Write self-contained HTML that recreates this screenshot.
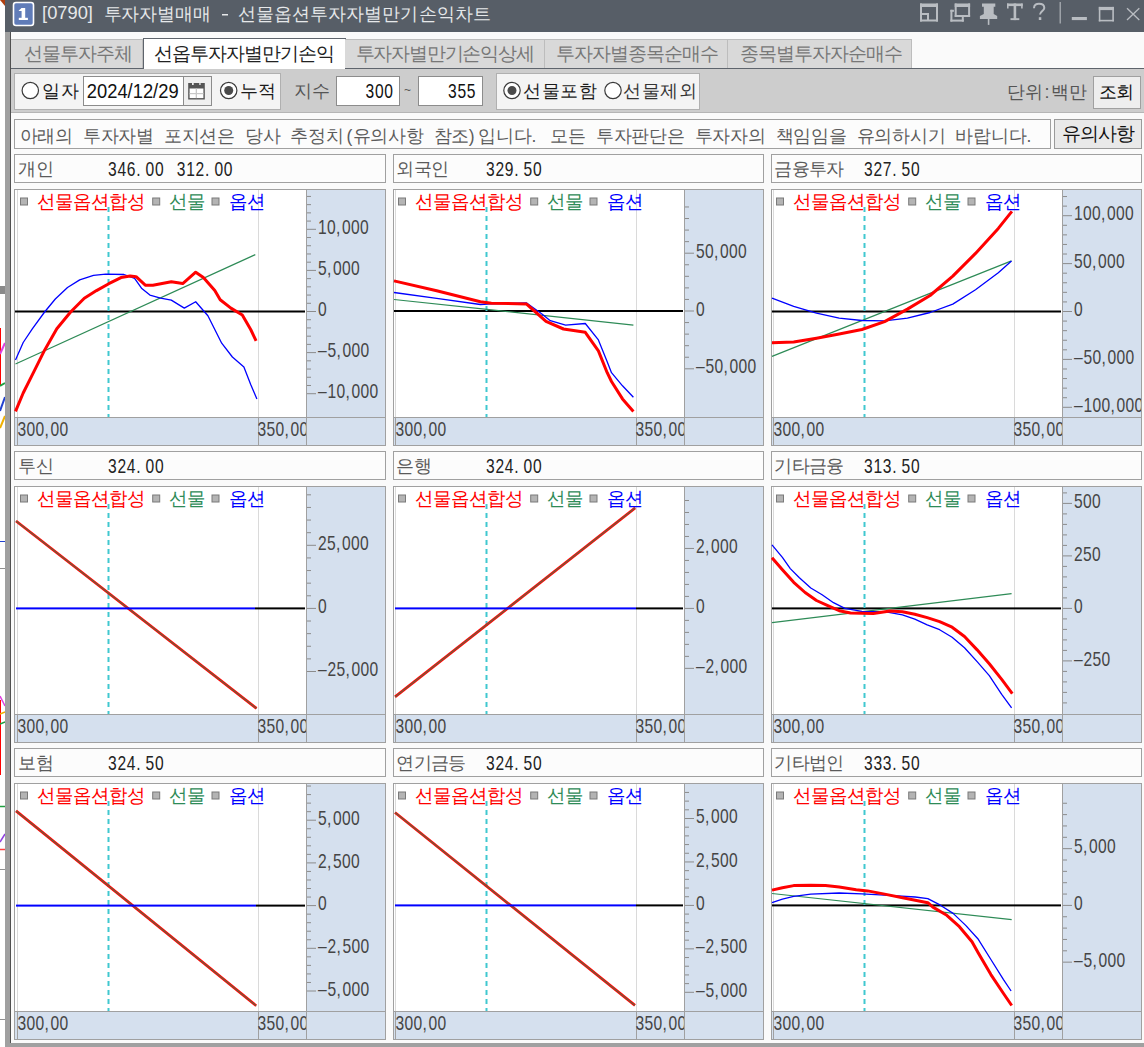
<!DOCTYPE html>
<html><head><meta charset="utf-8"><style>
html,body{margin:0;padding:0;background:#fafafa;width:1144px;height:1047px;overflow:hidden}
svg{display:block}
</style></head><body>
<svg width="1144" height="1047" viewBox="0 0 1144 1047" font-family="Liberation Sans, sans-serif" shape-rendering="auto">
<rect x="0" y="0" width="1144" height="1047" fill="#fafafa"/>
<rect x="0" y="0" width="5" height="1047" fill="#ffffff"/>
<polygon points="0,0 5,0 5,6" fill="#b04010"/>
<rect x="0" y="286" width="5" height="8" fill="#8a8a8a"/>
<rect x="0" y="328" width="1" height="58" fill="#ff0000"/>
<line x1="0" y1="354" x2="5" y2="343" stroke="#e040e0" stroke-width="2"/>
<line x1="0" y1="386" x2="5" y2="383" stroke="#20a040" stroke-width="2"/>
<line x1="0" y1="411" x2="5" y2="397" stroke="#2040d0" stroke-width="2"/>
<line x1="0" y1="428" x2="5" y2="416" stroke="#f0b000" stroke-width="2"/>
<line x1="0" y1="541.5" x2="5" y2="541.5" stroke="#2040d0" stroke-width="1"/>
<line x1="0" y1="568.5" x2="5" y2="568.5" stroke="#909090" stroke-width="1"/>
<line x1="0" y1="696" x2="5" y2="706" stroke="#e040e0" stroke-width="1.5"/>
<rect x="0" y="700" width="1" height="60" fill="#ff0000"/>
<line x1="0" y1="714" x2="5" y2="712" stroke="#f0b000" stroke-width="1.5"/>
<line x1="0" y1="724" x2="5" y2="722" stroke="#20a040" stroke-width="1.5"/>
<rect x="0" y="760" width="1" height="15" fill="#ff0000"/>
<line x1="0" y1="806.5" x2="5" y2="806.5" stroke="#20a040" stroke-width="1.5"/>
<line x1="0" y1="842" x2="5" y2="834" stroke="#9040e0" stroke-width="1.5"/>
<line x1="0" y1="849.5" x2="5" y2="849.5" stroke="#ff4040" stroke-width="1.5"/>
<line x1="0" y1="869.5" x2="5" y2="869.5" stroke="#909090" stroke-width="1"/>
<line x1="0" y1="1019.5" x2="5" y2="1019.5" stroke="#909090" stroke-width="1"/>
<rect x="5" y="32" width="5" height="1015" fill="#a0a0a0"/>
<rect x="10" y="32" width="1" height="1011" fill="#505050"/>
<rect x="5" y="1043" width="1139" height="4" fill="#a0a0a0"/>
<rect x="5" y="0" width="1139" height="32" fill="#575e67"/>
<rect x="13.5" y="2.5" width="20" height="23" rx="2.5" fill="#607cb8" stroke="#ffffff" stroke-width="1.6"/>
<rect x="21.6" y="8" width="3.6" height="11" fill="#ffffff"/>
<path d="M18.8 10.6 L21.6 8 H23 V11 H18.8 Z" fill="#ffffff"/>
<rect x="18.8" y="17.8" width="9.1" height="2.2" fill="#ffffff"/>
<text x="42.05" y="19.299999999999997" font-size="19" fill="#e6e8ea" textLength="50.9" lengthAdjust="spacingAndGlyphs">[0790]</text>
<text transform="translate(103.50 19.50) scale(1.0 1)" x="0.00 17.80 35.60 53.40 71.20 89.00" y="0" font-size="18" fill="#e6e8ea">투자자별매매</text>
<rect x="222" y="14" width="6" height="1.5" fill="#e6e8ea"/>
<text transform="translate(237.60 19.50) scale(1.0 1)" x="0.00 18.10 36.20 54.30 72.40 90.50 108.60 126.70 144.80 162.90 181.00 199.10 217.20 235.30" y="0" font-size="18" fill="#e6e8ea">선물옵션투자자별만기손익차트</text>
<rect x="920" y="3.5" width="18" height="3.5" fill="#b9bdc2"/>
<rect x="920" y="3.5" width="2" height="18" fill="#b9bdc2"/>
<rect x="936" y="3.5" width="2" height="18" fill="#b9bdc2"/>
<rect x="920" y="19.5" width="18" height="2" fill="#b9bdc2"/>
<rect x="920" y="13" width="9" height="2" fill="#b9bdc2"/>
<rect x="927" y="13" width="2" height="8" fill="#b9bdc2"/>
<rect x="954.7" y="3.5" width="15.4" height="3.5" fill="#b9bdc2"/>
<rect x="954.7" y="3.5" width="2" height="13.4" fill="#b9bdc2"/>
<rect x="968.1" y="3.5" width="2" height="13.4" fill="#b9bdc2"/>
<rect x="954.7" y="15" width="15.4" height="2" fill="#b9bdc2"/>
<rect x="950.4" y="9.8" width="2" height="11.8" fill="#b9bdc2"/>
<rect x="950.4" y="19.6" width="13.4" height="2" fill="#b9bdc2"/>
<rect x="961.8" y="17" width="2" height="4.6" fill="#b9bdc2"/>
<rect x="950.4" y="9.8" width="3.5" height="2" fill="#b9bdc2"/>
<path d="M982 3.5 H995.3 V6.7 H993.7 V14 L997.2 16 V18.9 H979.9 V16 L983.8 14 V6.7 H982 Z" fill="#b9bdc2"/>
<rect x="987.8" y="18.9" width="1.6" height="6" fill="#b9bdc2"/>
<rect x="1007" y="3.5" width="15.7" height="2.6" fill="#b9bdc2"/>
<rect x="1007" y="3.5" width="1.6" height="5" fill="#b9bdc2"/>
<rect x="1021.1" y="3.5" width="1.6" height="5" fill="#b9bdc2"/>
<rect x="1013.6" y="3.5" width="2.6" height="16.6" fill="#b9bdc2"/>
<rect x="1010.5" y="18.2" width="8.8" height="1.9" fill="#b9bdc2"/>
<path d="M1034 8.2 C1034 4.6 1036.5 3.8 1039 3.8 C1042 3.8 1044.3 5.3 1044.3 8 C1044.3 10.6 1040 11.4 1040 14.5" fill="none" stroke="#b9bdc2" stroke-width="2"/>
<rect x="1038.8" y="17.2" width="2.5" height="2.8" fill="#b9bdc2"/>
<rect x="1059.5" y="2" width="1.5" height="21.5" fill="#9da2a8"/>
<rect x="1071.8" y="17" width="15.1" height="3.1" fill="#b9bdc2"/>
<rect x="1098.8" y="6.9" width="15.1" height="3.2" fill="#b9bdc2"/>
<rect x="1098.8" y="6.9" width="1.6" height="14.5" fill="#b9bdc2"/>
<rect x="1112.3" y="6.9" width="1.6" height="14.5" fill="#b9bdc2"/>
<rect x="1098.8" y="19.8" width="15.1" height="1.6" fill="#b9bdc2"/>
<line x1="1127" y1="8.3" x2="1139.3" y2="20" stroke="#b9bdc2" stroke-width="1.3"/>
<line x1="1139.3" y1="8.3" x2="1127" y2="20" stroke="#b9bdc2" stroke-width="1.3"/>
<rect x="11" y="32" width="1133" height="37" fill="#fafafa"/>
<rect x="11" y="38" width="1133" height="0" fill="#fafafa"/>
<rect x="11" y="68" width="1133" height="1" fill="#5e646c"/>
<rect x="11" y="39" width="132" height="29" fill="#d9d9d9"/>
<rect x="11" y="39" width="132" height="1" fill="#bdbdbd"/>
<rect x="142" y="39" width="1" height="29" fill="#bdbdbd"/>
<rect x="143" y="38" width="203" height="31" fill="#ffffff"/>
<rect x="143" y="38" width="203" height="1" fill="#5e646c"/>
<rect x="143" y="38" width="1" height="31" fill="#5e646c"/>
<rect x="345" y="38" width="1" height="31" fill="#5e646c"/>
<rect x="345" y="39" width="200" height="29" fill="#d9d9d9"/>
<rect x="345" y="39" width="200" height="1" fill="#bdbdbd"/>
<rect x="544" y="39" width="1" height="29" fill="#bdbdbd"/>
<rect x="545" y="39" width="183" height="29" fill="#d9d9d9"/>
<rect x="545" y="39" width="183" height="1" fill="#bdbdbd"/>
<rect x="727" y="39" width="1" height="29" fill="#bdbdbd"/>
<rect x="728" y="39" width="184" height="29" fill="#d9d9d9"/>
<rect x="728" y="39" width="184" height="1" fill="#bdbdbd"/>
<rect x="911" y="39" width="1" height="29" fill="#bdbdbd"/>
<text transform="translate(23.90 60.27) scale(1.0 1)" x="0.00 18.00 36.00 54.00 72.00 90.00" y="0" font-size="18.5" fill="#777777">선물투자주체</text>
<text transform="translate(154.00 60.27) scale(1.0 1)" x="0.00 18.00 36.00 54.00 72.00 90.00 108.00 126.00 144.00 162.00" y="0" font-size="18.5" fill="#222222">선옵투자자별만기손익</text>
<text transform="translate(355.70 60.27) scale(1.0 1)" x="0.00 17.80 35.60 53.40 71.20 89.00 106.80 124.60 142.40 160.20" y="0" font-size="18.5" fill="#777777">투자자별만기손익상세</text>
<text transform="translate(555.60 60.27) scale(1.0 1)" x="0.00 18.10 36.20 54.30 72.40 90.50 108.60 126.70 144.80" y="0" font-size="18.5" fill="#777777">투자자별종목순매수</text>
<text transform="translate(739.90 60.27) scale(1.0 1)" x="0.00 18.00 36.00 54.00 72.00 90.00 108.00 126.00 144.00" y="0" font-size="18.5" fill="#777777">종목별투자자순매수</text>
<rect x="144" y="68" width="201" height="1" fill="#ffffff"/>
<rect x="11" y="69" width="1133" height="44" fill="#cdcdcd"/>
<rect x="11" y="112" width="1133" height="1" fill="#b5b5b5"/>
<rect x="14" y="73" width="267" height="37" fill="#f4f4f4"/>
<rect x="14" y="73" width="267" height="1" fill="#b0b0b0"/>
<rect x="14" y="109" width="267" height="1" fill="#b0b0b0"/>
<rect x="14" y="73" width="1" height="37" fill="#b0b0b0"/>
<rect x="280" y="73" width="1" height="37" fill="#b0b0b0"/>
<circle cx="30.3" cy="90.5" r="8.2" fill="#ffffff" stroke="#3a3a3a" stroke-width="1.2"/>
<text transform="translate(42.00 96.90) scale(1.0 1)" x="0.00 18.50" y="0" font-size="18" fill="#1a1a1a">일자</text>
<rect x="83" y="76" width="128" height="30" fill="#ffffff"/>
<rect x="83" y="76" width="129" height="1" fill="#8c8c8c"/>
<rect x="83" y="105" width="129" height="1" fill="#8c8c8c"/>
<rect x="83" y="76" width="1" height="30" fill="#8c8c8c"/>
<rect x="211" y="76" width="1" height="30" fill="#8c8c8c"/>
<rect x="184" y="77" width="27" height="28" fill="#efefef"/>
<rect x="183" y="77" width="1" height="28" fill="#8c8c8c"/>
<text x="86.8" y="98.0" font-size="20" fill="#111111" textLength="91.8" lengthAdjust="spacingAndGlyphs">2024/12/29</text>
<rect x="188.2" y="83" width="16.6" height="16.5" fill="#555555"/>
<rect x="189.6" y="88.5" width="13.8" height="9.6" fill="#ffffff"/>
<rect x="195.7" y="88.5" width="1.3" height="9.6" fill="#c8c8c8"/>
<rect x="189.6" y="93" width="13.8" height="1.2" fill="#c8c8c8"/>
<rect x="192" y="83" width="1.7" height="2" fill="#efefef"/>
<rect x="199.3" y="83" width="1.3" height="2" fill="#efefef"/>
<circle cx="228.7" cy="90.5" r="8.2" fill="#ffffff" stroke="#3a3a3a" stroke-width="1.2"/>
<circle cx="228.7" cy="90.5" r="4.5" fill="#4a4a4a"/>
<text transform="translate(240.00 96.90) scale(1.0 1)" x="0.00 18.00" y="0" font-size="18" fill="#1a1a1a">누적</text>
<text transform="translate(293.60 96.90) scale(1.0 1)" x="0.00 18.50" y="0" font-size="18" fill="#555555">지수</text>
<rect x="336" y="76" width="64" height="30" fill="#ffffff"/>
<rect x="336" y="76" width="64" height="1" fill="#8c8c8c"/>
<rect x="336" y="105" width="64" height="1" fill="#8c8c8c"/>
<rect x="336" y="76" width="1" height="30" fill="#8c8c8c"/>
<rect x="399" y="76" width="1" height="30" fill="#8c8c8c"/>
<text transform="translate(365.50 97.50) scale(0.78 1)" x="0.00 12.05 24.10" y="0" font-size="20" fill="#111111">300</text>
<text x="404" y="94" font-size="12" fill="#555555">~</text>
<rect x="418" y="76" width="64" height="30" fill="#ffffff"/>
<rect x="418" y="76" width="65" height="1" fill="#8c8c8c"/>
<rect x="418" y="105" width="65" height="1" fill="#8c8c8c"/>
<rect x="418" y="76" width="1" height="30" fill="#8c8c8c"/>
<rect x="482" y="76" width="1" height="30" fill="#8c8c8c"/>
<text transform="translate(448.00 97.50) scale(0.78 1)" x="0.00 12.05 24.10" y="0" font-size="20" fill="#111111">355</text>
<rect x="496" y="73" width="204" height="37" fill="#f4f4f4"/>
<rect x="496" y="73" width="204" height="1" fill="#b0b0b0"/>
<rect x="496" y="109" width="204" height="1" fill="#b0b0b0"/>
<rect x="496" y="73" width="1" height="37" fill="#b0b0b0"/>
<rect x="699" y="73" width="1" height="37" fill="#b0b0b0"/>
<circle cx="512" cy="90.5" r="8.2" fill="#ffffff" stroke="#3a3a3a" stroke-width="1.2"/>
<circle cx="512" cy="90.5" r="4.5" fill="#4a4a4a"/>
<text transform="translate(523.00 96.90) scale(1.0 1)" x="0.00 18.50 37.00 55.50" y="0" font-size="18" fill="#1a1a1a">선물포함</text>
<circle cx="613" cy="90.5" r="8.2" fill="#ffffff" stroke="#3a3a3a" stroke-width="1.2"/>
<text transform="translate(623.00 96.90) scale(1.0 1)" x="0.00 18.50 37.00 55.50" y="0" font-size="18" fill="#333333">선물제외</text>
<text transform="translate(1006.50 98.00) scale(1.0 1)" x="0.00 18.00 38.00 44.50 62.50" y="0" font-size="18" fill="#555555">단위:백만</text>
<rect x="1093" y="76" width="48" height="33" fill="#eeeeee"/>
<rect x="1093" y="76" width="48" height="1" fill="#a0a0a0"/>
<rect x="1093" y="108" width="48" height="1" fill="#a0a0a0"/>
<rect x="1093" y="76" width="1" height="33" fill="#a0a0a0"/>
<rect x="1140" y="76" width="1" height="33" fill="#a0a0a0"/>
<text transform="translate(1099.00 98.00) scale(1.0 1)" x="0.00 17.30" y="0" font-size="18" fill="#111111">조회</text>
<rect x="14" y="119" width="1037" height="30" fill="#fcfcfc"/>
<rect x="14" y="119" width="1037" height="1" fill="#a0a0a0"/>
<rect x="14" y="148" width="1037" height="1" fill="#a0a0a0"/>
<rect x="14" y="119" width="1" height="30" fill="#a0a0a0"/>
<rect x="1050" y="119" width="1" height="30" fill="#a0a0a0"/>
<text transform="translate(19.60 141.62) scale(1.0 1)" x="0.00 17.80 35.60 63.20 81.00 98.80 116.60 144.20 162.00 179.80 197.60 225.20 243.00 270.60 288.40 306.20 327.00 333.00 350.80 368.60 386.40 414.00 431.80 449.10 458.60 476.40 494.20 512.00 530.80 548.60 576.20 594.00 611.80 629.60 647.40 675.00 692.80 710.60 728.40 756.00 773.80 791.60 809.40 837.00 854.80 872.60 890.40 908.20 935.80 953.60 971.40 989.20 1007.00" y="0" font-size="17.5" fill="#5c5c5c">아래의투자자별포지션은당사추정치(유의사항참조)입니다.모든투자판단은투자자의책임임을유의하시기바랍니다.</text>
<rect x="1054" y="119" width="88" height="30" fill="#e9e9e9"/>
<rect x="1054" y="119" width="88" height="1" fill="#9a9a9a"/>
<rect x="1054" y="148" width="88" height="1" fill="#9a9a9a"/>
<rect x="1054" y="119" width="1" height="30" fill="#9a9a9a"/>
<rect x="1141" y="119" width="1" height="30" fill="#9a9a9a"/>
<text transform="translate(1061.70 140.07) scale(1.0 1)" x="0.00 18.00 36.00 54.00" y="0" font-size="18.5" fill="#111111">유의사항</text>
<rect x="14" y="154" width="372" height="29" fill="#fcfcfc"/>
<rect x="14" y="154" width="372" height="1" fill="#a0a0a0"/>
<rect x="14" y="182" width="372" height="1" fill="#a0a0a0"/>
<rect x="14" y="154" width="1" height="29" fill="#a0a0a0"/>
<rect x="385" y="154" width="1" height="29" fill="#a0a0a0"/>
<text transform="translate(18.40 175.00) scale(1.0 1)" x="0.00 17.20" y="0" font-size="18" fill="#5a5a5a">개인</text>
<text transform="translate(108.00 176.00) scale(0.78 1)" x="0.00 12.05 24.10 36.15 48.21 60.26" y="0" font-size="20" fill="#222222">346.00</text>
<text transform="translate(176.80 176.00) scale(0.78 1)" x="0.00 12.05 24.10 36.15 48.21 60.26" y="0" font-size="20" fill="#222222">312.00</text>
<rect x="14" y="189" width="372" height="257" fill="#ffffff"/>
<rect x="306" y="189" width="79" height="257" fill="#d5e0ee"/>
<rect x="14" y="417" width="292" height="28" fill="#d5e0ee"/>
<rect x="14" y="189" width="372" height="1" fill="#a0a0a0"/>
<rect x="14" y="445" width="372" height="1" fill="#a0a0a0"/>
<rect x="14" y="189" width="1" height="257" fill="#a0a0a0"/>
<rect x="385" y="189" width="1" height="257" fill="#a0a0a0"/>
<rect x="306" y="189" width="1" height="257" fill="#a0a0a0"/>
<rect x="14" y="417" width="372" height="1" fill="#a0a0a0"/>
<rect x="17" y="190" width="1" height="227" fill="#dadada"/>
<rect x="17" y="418" width="1" height="27" fill="#a0a0a0"/>
<rect x="258" y="190" width="1" height="227" fill="#dadada"/>
<rect x="258" y="418" width="1" height="27" fill="#a0a0a0"/>
<rect x="307" y="393.2" width="9" height="1" fill="#8c8c8c"/>
<rect x="307" y="384.98" width="4" height="1" fill="#8c8c8c"/>
<rect x="307" y="376.76" width="4" height="1" fill="#8c8c8c"/>
<rect x="307" y="368.54" width="4" height="1" fill="#8c8c8c"/>
<rect x="307" y="360.32" width="4" height="1" fill="#8c8c8c"/>
<rect x="307" y="352.1" width="9" height="1" fill="#8c8c8c"/>
<rect x="307" y="343.88" width="4" height="1" fill="#8c8c8c"/>
<rect x="307" y="335.66" width="4" height="1" fill="#8c8c8c"/>
<rect x="307" y="327.44" width="4" height="1" fill="#8c8c8c"/>
<rect x="307" y="319.22" width="4" height="1" fill="#8c8c8c"/>
<rect x="307" y="311.0" width="9" height="1" fill="#8c8c8c"/>
<rect x="307" y="302.78" width="4" height="1" fill="#8c8c8c"/>
<rect x="307" y="294.56" width="4" height="1" fill="#8c8c8c"/>
<rect x="307" y="286.34" width="4" height="1" fill="#8c8c8c"/>
<rect x="307" y="278.12" width="4" height="1" fill="#8c8c8c"/>
<rect x="307" y="269.9" width="9" height="1" fill="#8c8c8c"/>
<rect x="307" y="261.68" width="4" height="1" fill="#8c8c8c"/>
<rect x="307" y="253.46" width="4" height="1" fill="#8c8c8c"/>
<rect x="307" y="245.24" width="4" height="1" fill="#8c8c8c"/>
<rect x="307" y="237.01999999999998" width="4" height="1" fill="#8c8c8c"/>
<rect x="307" y="228.8" width="9" height="1" fill="#8c8c8c"/>
<rect x="307" y="220.57999999999998" width="4" height="1" fill="#8c8c8c"/>
<rect x="307" y="212.35999999999999" width="4" height="1" fill="#8c8c8c"/>
<rect x="307" y="204.14" width="4" height="1" fill="#8c8c8c"/>
<rect x="307" y="195.92000000000002" width="4" height="1" fill="#8c8c8c"/>
<svg x="14" y="189" width="371" height="256" overflow="hidden">
<text transform="translate(304.00 44.90) scale(0.78 1)" x="0.00 11.54 23.08 30.77 42.31 53.85" y="0" font-size="20" fill="#454545">10,000</text>
</svg>
<svg x="14" y="189" width="371" height="256" overflow="hidden">
<text transform="translate(304.00 86.00) scale(0.78 1)" x="0.00 11.54 19.23 30.77 42.31" y="0" font-size="20" fill="#454545">5,000</text>
</svg>
<svg x="14" y="189" width="371" height="256" overflow="hidden">
<text transform="translate(304.00 127.10) scale(0.78 1)" x="0.00" y="0" font-size="20" fill="#454545">0</text>
</svg>
<svg x="14" y="189" width="371" height="256" overflow="hidden">
<text transform="translate(304.00 168.20) scale(0.78 1)" x="0.00 12.18 23.72 31.41 42.95 54.49" y="0" font-size="20" fill="#454545">–5,000</text>
</svg>
<svg x="14" y="189" width="371" height="256" overflow="hidden">
<text transform="translate(304.00 209.30) scale(0.78 1)" x="0.00 12.18 23.72 35.26 42.95 54.49 66.03" y="0" font-size="20" fill="#454545">–10,000</text>
</svg>
<text transform="translate(17.40 436.00) scale(0.78 1)" x="0.00 11.54 23.08 34.62 42.31 53.85" y="0" font-size="20" fill="#454545">300,00</text>
<svg x="14" y="189" width="292" height="256" overflow="hidden">
<text transform="translate(243.60 247.00) scale(0.78 1)" x="0.00 11.54 23.08 34.62 42.31 53.85" y="0" font-size="20" fill="#454545">350,00</text>
</svg>
<rect x="15" y="310.5" width="290" height="2" fill="#000000"/>
<line x1="108.5" y1="207" x2="108.5" y2="417" stroke="#40c8d0" stroke-width="2" stroke-dasharray="5 4"/>
<polyline points="15.5,364.0 255.3,254.6" fill="none" stroke="#2e8b57" stroke-width="1.2" stroke-linejoin="round"/>
<polyline points="15.5,360.1 23.2,342.5 32.3,328.8 44.6,312.0 55.3,299.0 67.5,287.5 79.7,279.9 93.5,275.3 105.7,274.2 124.0,274.5 134.6,278.3 141.5,288.2 149.9,295.1 160.6,298.1 171.3,300.1 184.3,308.1 195.7,301.7 207.9,315.7 221.7,343.2 232.4,357.0 243.9,366.9 250.7,384.5 256.9,399.0" fill="none" stroke="#0000ff" stroke-width="1.3" stroke-linejoin="round"/>
<polyline points="15.5,411.3 23.2,393.0 33.9,371.6 44.6,350.2 56.8,328.8 70.6,312.0 84.3,298.2 96.5,290.6 108.8,283.7 121.0,277.6 130.2,276.0 136.1,276.7 145.3,285.2 152.9,285.2 162.1,283.6 171.3,281.8 182.7,283.6 195.7,272.2 203.4,277.5 214.8,290.5 220.2,299.7 230.9,308.1 242.3,315.0 250.7,329.5 256.1,340.9" fill="none" stroke="#ff0000" stroke-width="3.0" stroke-linejoin="round"/>
<rect x="20.5" y="198" width="7" height="7" fill="#b4b4b4" stroke="#7a7a7a" stroke-width="1"/>
<rect x="152.7" y="198" width="7" height="7" fill="#b4b4b4" stroke="#7a7a7a" stroke-width="1"/>
<rect x="212" y="198" width="7" height="7" fill="#b4b4b4" stroke="#7a7a7a" stroke-width="1"/>
<text transform="translate(37.00 208.25) scale(0.97 1)" x="0.00 18.56 37.11 55.67 74.23 92.78" y="0" font-size="19" fill="#ff0000">선물옵션합성</text>
<text transform="translate(169.00 208.25) scale(0.97 1)" x="0.00 18.56" y="0" font-size="19" fill="#2e8b57">선물</text>
<text transform="translate(229.00 208.25) scale(0.97 1)" x="0.00 18.56" y="0" font-size="19" fill="#0000ff">옵션</text>
<rect x="393" y="154" width="371" height="29" fill="#fcfcfc"/>
<rect x="393" y="154" width="371" height="1" fill="#a0a0a0"/>
<rect x="393" y="182" width="371" height="1" fill="#a0a0a0"/>
<rect x="393" y="154" width="1" height="29" fill="#a0a0a0"/>
<rect x="763" y="154" width="1" height="29" fill="#a0a0a0"/>
<text transform="translate(396.40 175.00) scale(1.0 1)" x="0.00 17.20 34.40" y="0" font-size="18" fill="#5a5a5a">외국인</text>
<text transform="translate(486.00 176.00) scale(0.78 1)" x="0.00 12.05 24.10 36.15 48.21 60.26" y="0" font-size="20" fill="#222222">329.50</text>
<rect x="393" y="189" width="371" height="257" fill="#ffffff"/>
<rect x="684" y="189" width="79" height="257" fill="#d5e0ee"/>
<rect x="393" y="417" width="291" height="28" fill="#d5e0ee"/>
<rect x="393" y="189" width="371" height="1" fill="#a0a0a0"/>
<rect x="393" y="445" width="371" height="1" fill="#a0a0a0"/>
<rect x="393" y="189" width="1" height="257" fill="#a0a0a0"/>
<rect x="763" y="189" width="1" height="257" fill="#a0a0a0"/>
<rect x="684" y="189" width="1" height="257" fill="#a0a0a0"/>
<rect x="393" y="417" width="371" height="1" fill="#a0a0a0"/>
<rect x="395" y="190" width="1" height="227" fill="#dadada"/>
<rect x="395" y="418" width="1" height="27" fill="#a0a0a0"/>
<rect x="636" y="190" width="1" height="227" fill="#dadada"/>
<rect x="636" y="418" width="1" height="27" fill="#a0a0a0"/>
<rect x="685" y="368.3" width="9" height="1" fill="#8c8c8c"/>
<rect x="685" y="356.74" width="4" height="1" fill="#8c8c8c"/>
<rect x="685" y="345.18" width="4" height="1" fill="#8c8c8c"/>
<rect x="685" y="333.62" width="4" height="1" fill="#8c8c8c"/>
<rect x="685" y="322.06" width="4" height="1" fill="#8c8c8c"/>
<rect x="685" y="310.5" width="9" height="1" fill="#8c8c8c"/>
<rect x="685" y="298.94" width="4" height="1" fill="#8c8c8c"/>
<rect x="685" y="287.38" width="4" height="1" fill="#8c8c8c"/>
<rect x="685" y="275.82" width="4" height="1" fill="#8c8c8c"/>
<rect x="685" y="264.26" width="4" height="1" fill="#8c8c8c"/>
<rect x="685" y="252.7" width="9" height="1" fill="#8c8c8c"/>
<rect x="685" y="241.14000000000001" width="4" height="1" fill="#8c8c8c"/>
<rect x="685" y="229.58" width="4" height="1" fill="#8c8c8c"/>
<rect x="685" y="218.02" width="4" height="1" fill="#8c8c8c"/>
<rect x="685" y="206.46" width="4" height="1" fill="#8c8c8c"/>
<svg x="393" y="189" width="370" height="256" overflow="hidden">
<text transform="translate(303.00 68.80) scale(0.78 1)" x="0.00 11.54 23.08 30.77 42.31 53.85" y="0" font-size="20" fill="#454545">50,000</text>
</svg>
<svg x="393" y="189" width="370" height="256" overflow="hidden">
<text transform="translate(303.00 126.60) scale(0.78 1)" x="0.00" y="0" font-size="20" fill="#454545">0</text>
</svg>
<svg x="393" y="189" width="370" height="256" overflow="hidden">
<text transform="translate(303.00 184.40) scale(0.78 1)" x="0.00 12.18 23.72 35.26 42.95 54.49 66.03" y="0" font-size="20" fill="#454545">–50,000</text>
</svg>
<text transform="translate(395.40 436.00) scale(0.78 1)" x="0.00 11.54 23.08 34.62 42.31 53.85" y="0" font-size="20" fill="#454545">300,00</text>
<svg x="393" y="189" width="291" height="256" overflow="hidden">
<text transform="translate(242.60 247.00) scale(0.78 1)" x="0.00 11.54 23.08 34.62 42.31 53.85" y="0" font-size="20" fill="#454545">350,00</text>
</svg>
<rect x="394" y="310" width="289" height="2" fill="#000000"/>
<line x1="486.5" y1="207" x2="486.5" y2="417" stroke="#40c8d0" stroke-width="2" stroke-dasharray="5 4"/>
<polyline points="394.0,299.5 487.0,309.3 633.4,325.1" fill="none" stroke="#2e8b57" stroke-width="1.2" stroke-linejoin="round"/>
<polyline points="394.0,292.5 436.7,298.4 480.4,304.5 491.3,303.9 526.3,302.8 541.6,313.7 550.3,320.7 565.6,325.1 585.3,323.5 598.4,339.9 607.2,361.8 611.5,372.7 622.5,385.8 633.4,397.2" fill="none" stroke="#0000ff" stroke-width="1.3" stroke-linejoin="round"/>
<polyline points="394.0,280.9 436.7,290.8 480.4,301.7 491.3,303.2 526.3,303.9 535.0,311.5 546.0,321.4 563.5,329.0 585.3,332.3 598.4,350.9 607.2,372.7 611.5,381.5 622.5,398.9 633.4,411.6" fill="none" stroke="#ff0000" stroke-width="3.0" stroke-linejoin="round"/>
<rect x="398.5" y="198" width="7" height="7" fill="#b4b4b4" stroke="#7a7a7a" stroke-width="1"/>
<rect x="530.7" y="198" width="7" height="7" fill="#b4b4b4" stroke="#7a7a7a" stroke-width="1"/>
<rect x="590" y="198" width="7" height="7" fill="#b4b4b4" stroke="#7a7a7a" stroke-width="1"/>
<text transform="translate(415.00 208.25) scale(0.97 1)" x="0.00 18.56 37.11 55.67 74.23 92.78" y="0" font-size="19" fill="#ff0000">선물옵션합성</text>
<text transform="translate(547.00 208.25) scale(0.97 1)" x="0.00 18.56" y="0" font-size="19" fill="#2e8b57">선물</text>
<text transform="translate(607.00 208.25) scale(0.97 1)" x="0.00 18.56" y="0" font-size="19" fill="#0000ff">옵션</text>
<rect x="771" y="154" width="371" height="29" fill="#fcfcfc"/>
<rect x="771" y="154" width="371" height="1" fill="#a0a0a0"/>
<rect x="771" y="182" width="371" height="1" fill="#a0a0a0"/>
<rect x="771" y="154" width="1" height="29" fill="#a0a0a0"/>
<rect x="1141" y="154" width="1" height="29" fill="#a0a0a0"/>
<text transform="translate(774.40 175.00) scale(1.0 1)" x="0.00 17.20 34.40 51.60" y="0" font-size="18" fill="#5a5a5a">금융투자</text>
<text transform="translate(864.00 176.00) scale(0.78 1)" x="0.00 12.05 24.10 36.15 48.21 60.26" y="0" font-size="20" fill="#222222">327.50</text>
<rect x="771" y="189" width="371" height="257" fill="#ffffff"/>
<rect x="1062" y="189" width="79" height="257" fill="#d5e0ee"/>
<rect x="771" y="417" width="291" height="28" fill="#d5e0ee"/>
<rect x="771" y="189" width="371" height="1" fill="#a0a0a0"/>
<rect x="771" y="445" width="371" height="1" fill="#a0a0a0"/>
<rect x="771" y="189" width="1" height="257" fill="#a0a0a0"/>
<rect x="1141" y="189" width="1" height="257" fill="#a0a0a0"/>
<rect x="1062" y="189" width="1" height="257" fill="#a0a0a0"/>
<rect x="771" y="417" width="371" height="1" fill="#a0a0a0"/>
<rect x="773" y="190" width="1" height="227" fill="#dadada"/>
<rect x="773" y="418" width="1" height="27" fill="#a0a0a0"/>
<rect x="1014" y="190" width="1" height="227" fill="#dadada"/>
<rect x="1014" y="418" width="1" height="27" fill="#a0a0a0"/>
<rect x="1063" y="406.8" width="9" height="1" fill="#8c8c8c"/>
<rect x="1063" y="397.22" width="4" height="1" fill="#8c8c8c"/>
<rect x="1063" y="387.64" width="4" height="1" fill="#8c8c8c"/>
<rect x="1063" y="378.06" width="4" height="1" fill="#8c8c8c"/>
<rect x="1063" y="368.48" width="4" height="1" fill="#8c8c8c"/>
<rect x="1063" y="358.9" width="9" height="1" fill="#8c8c8c"/>
<rect x="1063" y="349.32" width="4" height="1" fill="#8c8c8c"/>
<rect x="1063" y="339.74" width="4" height="1" fill="#8c8c8c"/>
<rect x="1063" y="330.16" width="4" height="1" fill="#8c8c8c"/>
<rect x="1063" y="320.58" width="4" height="1" fill="#8c8c8c"/>
<rect x="1063" y="311.0" width="9" height="1" fill="#8c8c8c"/>
<rect x="1063" y="301.42" width="4" height="1" fill="#8c8c8c"/>
<rect x="1063" y="291.84" width="4" height="1" fill="#8c8c8c"/>
<rect x="1063" y="282.26" width="4" height="1" fill="#8c8c8c"/>
<rect x="1063" y="272.68" width="4" height="1" fill="#8c8c8c"/>
<rect x="1063" y="263.1" width="9" height="1" fill="#8c8c8c"/>
<rect x="1063" y="253.52" width="4" height="1" fill="#8c8c8c"/>
<rect x="1063" y="243.94" width="4" height="1" fill="#8c8c8c"/>
<rect x="1063" y="234.36" width="4" height="1" fill="#8c8c8c"/>
<rect x="1063" y="224.78" width="4" height="1" fill="#8c8c8c"/>
<rect x="1063" y="215.2" width="9" height="1" fill="#8c8c8c"/>
<rect x="1063" y="205.62" width="4" height="1" fill="#8c8c8c"/>
<rect x="1063" y="196.04000000000002" width="4" height="1" fill="#8c8c8c"/>
<svg x="771" y="189" width="370" height="256" overflow="hidden">
<text transform="translate(303.00 31.30) scale(0.78 1)" x="0.00 11.54 23.08 34.62 42.31 53.85 65.38" y="0" font-size="20" fill="#454545">100,000</text>
</svg>
<svg x="771" y="189" width="370" height="256" overflow="hidden">
<text transform="translate(303.00 79.20) scale(0.78 1)" x="0.00 11.54 23.08 30.77 42.31 53.85" y="0" font-size="20" fill="#454545">50,000</text>
</svg>
<svg x="771" y="189" width="370" height="256" overflow="hidden">
<text transform="translate(303.00 127.10) scale(0.78 1)" x="0.00" y="0" font-size="20" fill="#454545">0</text>
</svg>
<svg x="771" y="189" width="370" height="256" overflow="hidden">
<text transform="translate(303.00 175.00) scale(0.78 1)" x="0.00 12.18 23.72 35.26 42.95 54.49 66.03" y="0" font-size="20" fill="#454545">–50,000</text>
</svg>
<svg x="771" y="189" width="370" height="256" overflow="hidden">
<text transform="translate(303.00 222.90) scale(0.78 1)" x="0.00 12.18 23.72 35.26 46.79 54.49 66.03 77.56" y="0" font-size="20" fill="#454545">–100,000</text>
</svg>
<text transform="translate(773.40 436.00) scale(0.78 1)" x="0.00 11.54 23.08 34.62 42.31 53.85" y="0" font-size="20" fill="#454545">300,00</text>
<svg x="771" y="189" width="291" height="256" overflow="hidden">
<text transform="translate(242.60 247.00) scale(0.78 1)" x="0.00 11.54 23.08 34.62 42.31 53.85" y="0" font-size="20" fill="#454545">350,00</text>
</svg>
<rect x="772" y="310.5" width="289" height="2" fill="#000000"/>
<line x1="864.5" y1="207" x2="864.5" y2="417" stroke="#40c8d0" stroke-width="2" stroke-dasharray="5 4"/>
<polyline points="772.0,356.4 1011.5,260.9" fill="none" stroke="#2e8b57" stroke-width="1.2" stroke-linejoin="round"/>
<polyline points="772.0,298.2 793.7,306.4 816.5,313.2 839.2,318.2 861.9,320.5 884.6,320.9 907.4,318.2 930.1,312.5 952.8,304.1 975.5,289.8 998.3,272.7 1011.5,260.9" fill="none" stroke="#0000ff" stroke-width="1.3" stroke-linejoin="round"/>
<polyline points="772.0,342.7 793.7,342.0 816.5,338.2 839.2,334.1 861.9,329.5 884.6,321.6 907.4,309.1 930.1,295.5 952.8,276.1 975.5,253.4 998.3,228.4 1011.9,211.4" fill="none" stroke="#ff0000" stroke-width="3.0" stroke-linejoin="round"/>
<rect x="776.5" y="198" width="7" height="7" fill="#b4b4b4" stroke="#7a7a7a" stroke-width="1"/>
<rect x="908.7" y="198" width="7" height="7" fill="#b4b4b4" stroke="#7a7a7a" stroke-width="1"/>
<rect x="968" y="198" width="7" height="7" fill="#b4b4b4" stroke="#7a7a7a" stroke-width="1"/>
<text transform="translate(793.00 208.25) scale(0.97 1)" x="0.00 18.56 37.11 55.67 74.23 92.78" y="0" font-size="19" fill="#ff0000">선물옵션합성</text>
<text transform="translate(925.00 208.25) scale(0.97 1)" x="0.00 18.56" y="0" font-size="19" fill="#2e8b57">선물</text>
<text transform="translate(985.00 208.25) scale(0.97 1)" x="0.00 18.56" y="0" font-size="19" fill="#0000ff">옵션</text>
<rect x="14" y="451" width="372" height="29" fill="#fcfcfc"/>
<rect x="14" y="451" width="372" height="1" fill="#a0a0a0"/>
<rect x="14" y="479" width="372" height="1" fill="#a0a0a0"/>
<rect x="14" y="451" width="1" height="29" fill="#a0a0a0"/>
<rect x="385" y="451" width="1" height="29" fill="#a0a0a0"/>
<text transform="translate(18.40 472.00) scale(1.0 1)" x="0.00 17.20" y="0" font-size="18" fill="#5a5a5a">투신</text>
<text transform="translate(108.00 473.00) scale(0.78 1)" x="0.00 12.05 24.10 36.15 48.21 60.26" y="0" font-size="20" fill="#222222">324.00</text>
<rect x="14" y="486" width="372" height="257" fill="#ffffff"/>
<rect x="306" y="486" width="79" height="257" fill="#d5e0ee"/>
<rect x="14" y="714" width="292" height="28" fill="#d5e0ee"/>
<rect x="14" y="486" width="372" height="1" fill="#a0a0a0"/>
<rect x="14" y="742" width="372" height="1" fill="#a0a0a0"/>
<rect x="14" y="486" width="1" height="257" fill="#a0a0a0"/>
<rect x="385" y="486" width="1" height="257" fill="#a0a0a0"/>
<rect x="306" y="486" width="1" height="257" fill="#a0a0a0"/>
<rect x="14" y="714" width="372" height="1" fill="#a0a0a0"/>
<rect x="17" y="487" width="1" height="227" fill="#dadada"/>
<rect x="17" y="715" width="1" height="27" fill="#a0a0a0"/>
<rect x="258" y="487" width="1" height="227" fill="#dadada"/>
<rect x="258" y="715" width="1" height="27" fill="#a0a0a0"/>
<rect x="307" y="671.0" width="9" height="1" fill="#8c8c8c"/>
<rect x="307" y="658.38" width="4" height="1" fill="#8c8c8c"/>
<rect x="307" y="645.76" width="4" height="1" fill="#8c8c8c"/>
<rect x="307" y="633.14" width="4" height="1" fill="#8c8c8c"/>
<rect x="307" y="620.52" width="4" height="1" fill="#8c8c8c"/>
<rect x="307" y="607.9" width="9" height="1" fill="#8c8c8c"/>
<rect x="307" y="595.28" width="4" height="1" fill="#8c8c8c"/>
<rect x="307" y="582.66" width="4" height="1" fill="#8c8c8c"/>
<rect x="307" y="570.04" width="4" height="1" fill="#8c8c8c"/>
<rect x="307" y="557.42" width="4" height="1" fill="#8c8c8c"/>
<rect x="307" y="544.8" width="9" height="1" fill="#8c8c8c"/>
<rect x="307" y="532.18" width="4" height="1" fill="#8c8c8c"/>
<rect x="307" y="519.56" width="4" height="1" fill="#8c8c8c"/>
<rect x="307" y="506.93999999999994" width="4" height="1" fill="#8c8c8c"/>
<rect x="307" y="494.32" width="4" height="1" fill="#8c8c8c"/>
<svg x="14" y="486" width="371" height="256" overflow="hidden">
<text transform="translate(304.00 63.90) scale(0.78 1)" x="0.00 11.54 23.08 30.77 42.31 53.85" y="0" font-size="20" fill="#454545">25,000</text>
</svg>
<svg x="14" y="486" width="371" height="256" overflow="hidden">
<text transform="translate(304.00 127.00) scale(0.78 1)" x="0.00" y="0" font-size="20" fill="#454545">0</text>
</svg>
<svg x="14" y="486" width="371" height="256" overflow="hidden">
<text transform="translate(304.00 190.10) scale(0.78 1)" x="0.00 12.18 23.72 35.26 42.95 54.49 66.03" y="0" font-size="20" fill="#454545">–25,000</text>
</svg>
<text transform="translate(17.40 733.00) scale(0.78 1)" x="0.00 11.54 23.08 34.62 42.31 53.85" y="0" font-size="20" fill="#454545">300,00</text>
<svg x="14" y="486" width="292" height="256" overflow="hidden">
<text transform="translate(243.60 247.00) scale(0.78 1)" x="0.00 11.54 23.08 34.62 42.31 53.85" y="0" font-size="20" fill="#454545">350,00</text>
</svg>
<rect x="255" y="607.4" width="50" height="2" fill="#000000"/>
<line x1="108.5" y1="504" x2="108.5" y2="714" stroke="#40c8d0" stroke-width="2" stroke-dasharray="5 4"/>
<polyline points="16.0,521.0 256.5,708.4" fill="none" stroke="#ff0000" stroke-width="2.7" stroke-linejoin="round"/>
<polyline points="16.0,521.0 256.5,708.4" fill="none" stroke="#2e8b57" stroke-width="1" stroke-linejoin="round"/>
<rect x="16" y="607.4" width="239" height="2" fill="#0000ff"/>
<rect x="20.5" y="495" width="7" height="7" fill="#b4b4b4" stroke="#7a7a7a" stroke-width="1"/>
<rect x="152.7" y="495" width="7" height="7" fill="#b4b4b4" stroke="#7a7a7a" stroke-width="1"/>
<rect x="212" y="495" width="7" height="7" fill="#b4b4b4" stroke="#7a7a7a" stroke-width="1"/>
<text transform="translate(37.00 505.25) scale(0.97 1)" x="0.00 18.56 37.11 55.67 74.23 92.78" y="0" font-size="19" fill="#ff0000">선물옵션합성</text>
<text transform="translate(169.00 505.25) scale(0.97 1)" x="0.00 18.56" y="0" font-size="19" fill="#2e8b57">선물</text>
<text transform="translate(229.00 505.25) scale(0.97 1)" x="0.00 18.56" y="0" font-size="19" fill="#0000ff">옵션</text>
<rect x="393" y="451" width="371" height="29" fill="#fcfcfc"/>
<rect x="393" y="451" width="371" height="1" fill="#a0a0a0"/>
<rect x="393" y="479" width="371" height="1" fill="#a0a0a0"/>
<rect x="393" y="451" width="1" height="29" fill="#a0a0a0"/>
<rect x="763" y="451" width="1" height="29" fill="#a0a0a0"/>
<text transform="translate(396.40 472.00) scale(1.0 1)" x="0.00 17.20" y="0" font-size="18" fill="#5a5a5a">은행</text>
<text transform="translate(486.00 473.00) scale(0.78 1)" x="0.00 12.05 24.10 36.15 48.21 60.26" y="0" font-size="20" fill="#222222">324.00</text>
<rect x="393" y="486" width="371" height="257" fill="#ffffff"/>
<rect x="684" y="486" width="79" height="257" fill="#d5e0ee"/>
<rect x="393" y="714" width="291" height="28" fill="#d5e0ee"/>
<rect x="393" y="486" width="371" height="1" fill="#a0a0a0"/>
<rect x="393" y="742" width="371" height="1" fill="#a0a0a0"/>
<rect x="393" y="486" width="1" height="257" fill="#a0a0a0"/>
<rect x="763" y="486" width="1" height="257" fill="#a0a0a0"/>
<rect x="684" y="486" width="1" height="257" fill="#a0a0a0"/>
<rect x="393" y="714" width="371" height="1" fill="#a0a0a0"/>
<rect x="395" y="487" width="1" height="227" fill="#dadada"/>
<rect x="395" y="715" width="1" height="27" fill="#a0a0a0"/>
<rect x="636" y="487" width="1" height="227" fill="#dadada"/>
<rect x="636" y="715" width="1" height="27" fill="#a0a0a0"/>
<rect x="685" y="667.85" width="9" height="1" fill="#8c8c8c"/>
<rect x="685" y="655.86" width="4" height="1" fill="#8c8c8c"/>
<rect x="685" y="643.87" width="4" height="1" fill="#8c8c8c"/>
<rect x="685" y="631.88" width="4" height="1" fill="#8c8c8c"/>
<rect x="685" y="619.89" width="4" height="1" fill="#8c8c8c"/>
<rect x="685" y="607.9" width="9" height="1" fill="#8c8c8c"/>
<rect x="685" y="595.91" width="4" height="1" fill="#8c8c8c"/>
<rect x="685" y="583.92" width="4" height="1" fill="#8c8c8c"/>
<rect x="685" y="571.93" width="4" height="1" fill="#8c8c8c"/>
<rect x="685" y="559.9399999999999" width="4" height="1" fill="#8c8c8c"/>
<rect x="685" y="547.9499999999999" width="9" height="1" fill="#8c8c8c"/>
<rect x="685" y="535.9599999999999" width="4" height="1" fill="#8c8c8c"/>
<rect x="685" y="523.97" width="4" height="1" fill="#8c8c8c"/>
<rect x="685" y="511.98" width="4" height="1" fill="#8c8c8c"/>
<rect x="685" y="499.98999999999995" width="4" height="1" fill="#8c8c8c"/>
<svg x="393" y="486" width="370" height="256" overflow="hidden">
<text transform="translate(303.00 67.05) scale(0.78 1)" x="0.00 11.54 19.23 30.77 42.31" y="0" font-size="20" fill="#454545">2,000</text>
</svg>
<svg x="393" y="486" width="370" height="256" overflow="hidden">
<text transform="translate(303.00 127.00) scale(0.78 1)" x="0.00" y="0" font-size="20" fill="#454545">0</text>
</svg>
<svg x="393" y="486" width="370" height="256" overflow="hidden">
<text transform="translate(303.00 186.95) scale(0.78 1)" x="0.00 12.18 23.72 31.41 42.95 54.49" y="0" font-size="20" fill="#454545">–2,000</text>
</svg>
<text transform="translate(395.40 733.00) scale(0.78 1)" x="0.00 11.54 23.08 34.62 42.31 53.85" y="0" font-size="20" fill="#454545">300,00</text>
<svg x="393" y="486" width="291" height="256" overflow="hidden">
<text transform="translate(242.60 247.00) scale(0.78 1)" x="0.00 11.54 23.08 34.62 42.31 53.85" y="0" font-size="20" fill="#454545">350,00</text>
</svg>
<rect x="636" y="607.4" width="47" height="2" fill="#000000"/>
<line x1="486.5" y1="504" x2="486.5" y2="714" stroke="#40c8d0" stroke-width="2" stroke-dasharray="5 4"/>
<polyline points="395.0,696.9 635.2,507.9" fill="none" stroke="#ff0000" stroke-width="2.7" stroke-linejoin="round"/>
<polyline points="395.0,696.9 635.2,507.9" fill="none" stroke="#2e8b57" stroke-width="1" stroke-linejoin="round"/>
<rect x="395" y="607.4" width="241" height="2" fill="#0000ff"/>
<rect x="398.5" y="495" width="7" height="7" fill="#b4b4b4" stroke="#7a7a7a" stroke-width="1"/>
<rect x="530.7" y="495" width="7" height="7" fill="#b4b4b4" stroke="#7a7a7a" stroke-width="1"/>
<rect x="590" y="495" width="7" height="7" fill="#b4b4b4" stroke="#7a7a7a" stroke-width="1"/>
<text transform="translate(415.00 505.25) scale(0.97 1)" x="0.00 18.56 37.11 55.67 74.23 92.78" y="0" font-size="19" fill="#ff0000">선물옵션합성</text>
<text transform="translate(547.00 505.25) scale(0.97 1)" x="0.00 18.56" y="0" font-size="19" fill="#2e8b57">선물</text>
<text transform="translate(607.00 505.25) scale(0.97 1)" x="0.00 18.56" y="0" font-size="19" fill="#0000ff">옵션</text>
<rect x="771" y="451" width="371" height="29" fill="#fcfcfc"/>
<rect x="771" y="451" width="371" height="1" fill="#a0a0a0"/>
<rect x="771" y="479" width="371" height="1" fill="#a0a0a0"/>
<rect x="771" y="451" width="1" height="29" fill="#a0a0a0"/>
<rect x="1141" y="451" width="1" height="29" fill="#a0a0a0"/>
<text transform="translate(774.40 472.00) scale(1.0 1)" x="0.00 17.20 34.40 51.60" y="0" font-size="18" fill="#5a5a5a">기타금융</text>
<text transform="translate(864.00 473.00) scale(0.78 1)" x="0.00 12.05 24.10 36.15 48.21 60.26" y="0" font-size="20" fill="#222222">313.50</text>
<rect x="771" y="486" width="371" height="257" fill="#ffffff"/>
<rect x="1062" y="486" width="79" height="257" fill="#d5e0ee"/>
<rect x="771" y="714" width="291" height="28" fill="#d5e0ee"/>
<rect x="771" y="486" width="371" height="1" fill="#a0a0a0"/>
<rect x="771" y="742" width="371" height="1" fill="#a0a0a0"/>
<rect x="771" y="486" width="1" height="257" fill="#a0a0a0"/>
<rect x="1141" y="486" width="1" height="257" fill="#a0a0a0"/>
<rect x="1062" y="486" width="1" height="257" fill="#a0a0a0"/>
<rect x="771" y="714" width="371" height="1" fill="#a0a0a0"/>
<rect x="773" y="487" width="1" height="227" fill="#dadada"/>
<rect x="773" y="715" width="1" height="27" fill="#a0a0a0"/>
<rect x="1014" y="487" width="1" height="227" fill="#dadada"/>
<rect x="1014" y="715" width="1" height="27" fill="#a0a0a0"/>
<rect x="1063" y="702.4" width="4" height="1" fill="#8c8c8c"/>
<rect x="1063" y="691.9" width="4" height="1" fill="#8c8c8c"/>
<rect x="1063" y="681.4" width="4" height="1" fill="#8c8c8c"/>
<rect x="1063" y="670.9" width="4" height="1" fill="#8c8c8c"/>
<rect x="1063" y="660.4" width="9" height="1" fill="#8c8c8c"/>
<rect x="1063" y="649.9" width="4" height="1" fill="#8c8c8c"/>
<rect x="1063" y="639.4" width="4" height="1" fill="#8c8c8c"/>
<rect x="1063" y="628.9" width="4" height="1" fill="#8c8c8c"/>
<rect x="1063" y="618.4" width="4" height="1" fill="#8c8c8c"/>
<rect x="1063" y="607.9" width="9" height="1" fill="#8c8c8c"/>
<rect x="1063" y="597.4" width="4" height="1" fill="#8c8c8c"/>
<rect x="1063" y="586.9" width="4" height="1" fill="#8c8c8c"/>
<rect x="1063" y="576.4" width="4" height="1" fill="#8c8c8c"/>
<rect x="1063" y="565.9" width="4" height="1" fill="#8c8c8c"/>
<rect x="1063" y="555.4" width="9" height="1" fill="#8c8c8c"/>
<rect x="1063" y="544.9" width="4" height="1" fill="#8c8c8c"/>
<rect x="1063" y="534.4" width="4" height="1" fill="#8c8c8c"/>
<rect x="1063" y="523.9" width="4" height="1" fill="#8c8c8c"/>
<rect x="1063" y="513.4" width="4" height="1" fill="#8c8c8c"/>
<rect x="1063" y="502.9" width="9" height="1" fill="#8c8c8c"/>
<rect x="1063" y="492.4" width="4" height="1" fill="#8c8c8c"/>
<svg x="771" y="486" width="370" height="256" overflow="hidden">
<text transform="translate(303.00 22.00) scale(0.78 1)" x="0.00 11.54 23.08" y="0" font-size="20" fill="#454545">500</text>
</svg>
<svg x="771" y="486" width="370" height="256" overflow="hidden">
<text transform="translate(303.00 74.50) scale(0.78 1)" x="0.00 11.54 23.08" y="0" font-size="20" fill="#454545">250</text>
</svg>
<svg x="771" y="486" width="370" height="256" overflow="hidden">
<text transform="translate(303.00 127.00) scale(0.78 1)" x="0.00" y="0" font-size="20" fill="#454545">0</text>
</svg>
<svg x="771" y="486" width="370" height="256" overflow="hidden">
<text transform="translate(303.00 179.50) scale(0.78 1)" x="0.00 12.18 23.72 35.26" y="0" font-size="20" fill="#454545">–250</text>
</svg>
<text transform="translate(773.40 733.00) scale(0.78 1)" x="0.00 11.54 23.08 34.62 42.31 53.85" y="0" font-size="20" fill="#454545">300,00</text>
<svg x="771" y="486" width="291" height="256" overflow="hidden">
<text transform="translate(242.60 247.00) scale(0.78 1)" x="0.00 11.54 23.08 34.62 42.31 53.85" y="0" font-size="20" fill="#454545">350,00</text>
</svg>
<rect x="772" y="607.4" width="289" height="2" fill="#000000"/>
<line x1="864.5" y1="504" x2="864.5" y2="714" stroke="#40c8d0" stroke-width="2" stroke-dasharray="5 4"/>
<polyline points="772.0,622.6 1011.6,593.7" fill="none" stroke="#2e8b57" stroke-width="1.2" stroke-linejoin="round"/>
<polyline points="772.0,544.8 782.4,557.3 790.3,568.6 799.4,577.7 810.8,588.0 822.1,594.8 833.5,602.7 844.9,608.4 861.9,611.3 884.6,611.6 902.4,614.8 914.8,619.2 927.2,624.8 939.6,629.7 952.1,637.2 964.5,647.7 976.9,661.4 989.3,675.6 1001.7,694.3 1011.6,707.9" fill="none" stroke="#0000ff" stroke-width="1.3" stroke-linejoin="round"/>
<polyline points="772.0,557.8 782.4,569.8 793.7,582.3 805.1,592.5 816.5,600.5 827.8,605.6 839.2,610.7 850.5,613.0 873.3,613.5 890.0,611.1 902.4,611.7 914.8,614.2 927.2,617.6 939.6,621.6 952.1,627.2 964.5,636.5 976.9,649.6 989.3,663.8 1001.7,679.4 1012.3,693.6" fill="none" stroke="#ff0000" stroke-width="3.0" stroke-linejoin="round"/>
<rect x="776.5" y="495" width="7" height="7" fill="#b4b4b4" stroke="#7a7a7a" stroke-width="1"/>
<rect x="908.7" y="495" width="7" height="7" fill="#b4b4b4" stroke="#7a7a7a" stroke-width="1"/>
<rect x="968" y="495" width="7" height="7" fill="#b4b4b4" stroke="#7a7a7a" stroke-width="1"/>
<text transform="translate(793.00 505.25) scale(0.97 1)" x="0.00 18.56 37.11 55.67 74.23 92.78" y="0" font-size="19" fill="#ff0000">선물옵션합성</text>
<text transform="translate(925.00 505.25) scale(0.97 1)" x="0.00 18.56" y="0" font-size="19" fill="#2e8b57">선물</text>
<text transform="translate(985.00 505.25) scale(0.97 1)" x="0.00 18.56" y="0" font-size="19" fill="#0000ff">옵션</text>
<rect x="14" y="748" width="372" height="29" fill="#fcfcfc"/>
<rect x="14" y="748" width="372" height="1" fill="#a0a0a0"/>
<rect x="14" y="776" width="372" height="1" fill="#a0a0a0"/>
<rect x="14" y="748" width="1" height="29" fill="#a0a0a0"/>
<rect x="385" y="748" width="1" height="29" fill="#a0a0a0"/>
<text transform="translate(18.40 769.00) scale(1.0 1)" x="0.00 17.20" y="0" font-size="18" fill="#5a5a5a">보험</text>
<text transform="translate(108.00 770.00) scale(0.78 1)" x="0.00 12.05 24.10 36.15 48.21 60.26" y="0" font-size="20" fill="#222222">324.50</text>
<rect x="14" y="783" width="372" height="257" fill="#ffffff"/>
<rect x="306" y="783" width="79" height="257" fill="#d5e0ee"/>
<rect x="14" y="1011" width="292" height="28" fill="#d5e0ee"/>
<rect x="14" y="783" width="372" height="1" fill="#a0a0a0"/>
<rect x="14" y="1039" width="372" height="1" fill="#a0a0a0"/>
<rect x="14" y="783" width="1" height="257" fill="#a0a0a0"/>
<rect x="385" y="783" width="1" height="257" fill="#a0a0a0"/>
<rect x="306" y="783" width="1" height="257" fill="#a0a0a0"/>
<rect x="14" y="1011" width="372" height="1" fill="#a0a0a0"/>
<rect x="17" y="784" width="1" height="227" fill="#dadada"/>
<rect x="17" y="1012" width="1" height="27" fill="#a0a0a0"/>
<rect x="258" y="784" width="1" height="227" fill="#dadada"/>
<rect x="258" y="1012" width="1" height="27" fill="#a0a0a0"/>
<rect x="307" y="990.5" width="9" height="1" fill="#8c8c8c"/>
<rect x="307" y="981.96" width="4" height="1" fill="#8c8c8c"/>
<rect x="307" y="973.4200000000001" width="4" height="1" fill="#8c8c8c"/>
<rect x="307" y="964.88" width="4" height="1" fill="#8c8c8c"/>
<rect x="307" y="956.34" width="4" height="1" fill="#8c8c8c"/>
<rect x="307" y="947.8000000000001" width="9" height="1" fill="#8c8c8c"/>
<rect x="307" y="939.26" width="4" height="1" fill="#8c8c8c"/>
<rect x="307" y="930.72" width="4" height="1" fill="#8c8c8c"/>
<rect x="307" y="922.1800000000001" width="4" height="1" fill="#8c8c8c"/>
<rect x="307" y="913.64" width="4" height="1" fill="#8c8c8c"/>
<rect x="307" y="905.1" width="9" height="1" fill="#8c8c8c"/>
<rect x="307" y="896.5600000000001" width="4" height="1" fill="#8c8c8c"/>
<rect x="307" y="888.02" width="4" height="1" fill="#8c8c8c"/>
<rect x="307" y="879.48" width="4" height="1" fill="#8c8c8c"/>
<rect x="307" y="870.94" width="4" height="1" fill="#8c8c8c"/>
<rect x="307" y="862.4" width="9" height="1" fill="#8c8c8c"/>
<rect x="307" y="853.86" width="4" height="1" fill="#8c8c8c"/>
<rect x="307" y="845.32" width="4" height="1" fill="#8c8c8c"/>
<rect x="307" y="836.78" width="4" height="1" fill="#8c8c8c"/>
<rect x="307" y="828.24" width="4" height="1" fill="#8c8c8c"/>
<rect x="307" y="819.7" width="9" height="1" fill="#8c8c8c"/>
<rect x="307" y="811.16" width="4" height="1" fill="#8c8c8c"/>
<rect x="307" y="802.62" width="4" height="1" fill="#8c8c8c"/>
<rect x="307" y="794.08" width="4" height="1" fill="#8c8c8c"/>
<rect x="307" y="785.54" width="4" height="1" fill="#8c8c8c"/>
<svg x="14" y="783" width="371" height="256" overflow="hidden">
<text transform="translate(304.00 41.80) scale(0.78 1)" x="0.00 11.54 19.23 30.77 42.31" y="0" font-size="20" fill="#454545">5,000</text>
</svg>
<svg x="14" y="783" width="371" height="256" overflow="hidden">
<text transform="translate(304.00 84.50) scale(0.78 1)" x="0.00 11.54 19.23 30.77 42.31" y="0" font-size="20" fill="#454545">2,500</text>
</svg>
<svg x="14" y="783" width="371" height="256" overflow="hidden">
<text transform="translate(304.00 127.20) scale(0.78 1)" x="0.00" y="0" font-size="20" fill="#454545">0</text>
</svg>
<svg x="14" y="783" width="371" height="256" overflow="hidden">
<text transform="translate(304.00 169.90) scale(0.78 1)" x="0.00 12.18 23.72 31.41 42.95 54.49" y="0" font-size="20" fill="#454545">–2,500</text>
</svg>
<svg x="14" y="783" width="371" height="256" overflow="hidden">
<text transform="translate(304.00 212.60) scale(0.78 1)" x="0.00 12.18 23.72 31.41 42.95 54.49" y="0" font-size="20" fill="#454545">–5,000</text>
</svg>
<text transform="translate(17.40 1030.00) scale(0.78 1)" x="0.00 11.54 23.08 34.62 42.31 53.85" y="0" font-size="20" fill="#454545">300,00</text>
<svg x="14" y="783" width="292" height="256" overflow="hidden">
<text transform="translate(243.60 247.00) scale(0.78 1)" x="0.00 11.54 23.08 34.62 42.31 53.85" y="0" font-size="20" fill="#454545">350,00</text>
</svg>
<rect x="256" y="904.6" width="49" height="2" fill="#000000"/>
<line x1="108.5" y1="801" x2="108.5" y2="1011" stroke="#40c8d0" stroke-width="2" stroke-dasharray="5 4"/>
<polyline points="16.0,810.9 256.2,1005.7" fill="none" stroke="#ff0000" stroke-width="2.7" stroke-linejoin="round"/>
<polyline points="16.0,810.9 256.2,1005.7" fill="none" stroke="#2e8b57" stroke-width="1" stroke-linejoin="round"/>
<rect x="16" y="904.6" width="240" height="2" fill="#0000ff"/>
<rect x="20.5" y="792" width="7" height="7" fill="#b4b4b4" stroke="#7a7a7a" stroke-width="1"/>
<rect x="152.7" y="792" width="7" height="7" fill="#b4b4b4" stroke="#7a7a7a" stroke-width="1"/>
<rect x="212" y="792" width="7" height="7" fill="#b4b4b4" stroke="#7a7a7a" stroke-width="1"/>
<text transform="translate(37.00 802.25) scale(0.97 1)" x="0.00 18.56 37.11 55.67 74.23 92.78" y="0" font-size="19" fill="#ff0000">선물옵션합성</text>
<text transform="translate(169.00 802.25) scale(0.97 1)" x="0.00 18.56" y="0" font-size="19" fill="#2e8b57">선물</text>
<text transform="translate(229.00 802.25) scale(0.97 1)" x="0.00 18.56" y="0" font-size="19" fill="#0000ff">옵션</text>
<rect x="393" y="748" width="371" height="29" fill="#fcfcfc"/>
<rect x="393" y="748" width="371" height="1" fill="#a0a0a0"/>
<rect x="393" y="776" width="371" height="1" fill="#a0a0a0"/>
<rect x="393" y="748" width="1" height="29" fill="#a0a0a0"/>
<rect x="763" y="748" width="1" height="29" fill="#a0a0a0"/>
<text transform="translate(396.40 769.00) scale(1.0 1)" x="0.00 17.20 34.40 51.60" y="0" font-size="18" fill="#5a5a5a">연기금등</text>
<text transform="translate(486.00 770.00) scale(0.78 1)" x="0.00 12.05 24.10 36.15 48.21 60.26" y="0" font-size="20" fill="#222222">324.50</text>
<rect x="393" y="783" width="371" height="257" fill="#ffffff"/>
<rect x="684" y="783" width="79" height="257" fill="#d5e0ee"/>
<rect x="393" y="1011" width="291" height="28" fill="#d5e0ee"/>
<rect x="393" y="783" width="371" height="1" fill="#a0a0a0"/>
<rect x="393" y="1039" width="371" height="1" fill="#a0a0a0"/>
<rect x="393" y="783" width="1" height="257" fill="#a0a0a0"/>
<rect x="763" y="783" width="1" height="257" fill="#a0a0a0"/>
<rect x="684" y="783" width="1" height="257" fill="#a0a0a0"/>
<rect x="393" y="1011" width="371" height="1" fill="#a0a0a0"/>
<rect x="395" y="784" width="1" height="227" fill="#dadada"/>
<rect x="395" y="1012" width="1" height="27" fill="#a0a0a0"/>
<rect x="636" y="784" width="1" height="227" fill="#dadada"/>
<rect x="636" y="1012" width="1" height="27" fill="#a0a0a0"/>
<rect x="685" y="991.8" width="9" height="1" fill="#8c8c8c"/>
<rect x="685" y="983.11" width="4" height="1" fill="#8c8c8c"/>
<rect x="685" y="974.42" width="4" height="1" fill="#8c8c8c"/>
<rect x="685" y="965.73" width="4" height="1" fill="#8c8c8c"/>
<rect x="685" y="957.04" width="4" height="1" fill="#8c8c8c"/>
<rect x="685" y="948.35" width="9" height="1" fill="#8c8c8c"/>
<rect x="685" y="939.66" width="4" height="1" fill="#8c8c8c"/>
<rect x="685" y="930.97" width="4" height="1" fill="#8c8c8c"/>
<rect x="685" y="922.28" width="4" height="1" fill="#8c8c8c"/>
<rect x="685" y="913.59" width="4" height="1" fill="#8c8c8c"/>
<rect x="685" y="904.9" width="9" height="1" fill="#8c8c8c"/>
<rect x="685" y="896.2099999999999" width="4" height="1" fill="#8c8c8c"/>
<rect x="685" y="887.52" width="4" height="1" fill="#8c8c8c"/>
<rect x="685" y="878.8299999999999" width="4" height="1" fill="#8c8c8c"/>
<rect x="685" y="870.14" width="4" height="1" fill="#8c8c8c"/>
<rect x="685" y="861.4499999999999" width="9" height="1" fill="#8c8c8c"/>
<rect x="685" y="852.76" width="4" height="1" fill="#8c8c8c"/>
<rect x="685" y="844.0699999999999" width="4" height="1" fill="#8c8c8c"/>
<rect x="685" y="835.38" width="4" height="1" fill="#8c8c8c"/>
<rect x="685" y="826.6899999999999" width="4" height="1" fill="#8c8c8c"/>
<rect x="685" y="818.0" width="9" height="1" fill="#8c8c8c"/>
<rect x="685" y="809.31" width="4" height="1" fill="#8c8c8c"/>
<rect x="685" y="800.62" width="4" height="1" fill="#8c8c8c"/>
<rect x="685" y="791.93" width="4" height="1" fill="#8c8c8c"/>
<svg x="393" y="783" width="370" height="256" overflow="hidden">
<text transform="translate(303.00 40.10) scale(0.78 1)" x="0.00 11.54 19.23 30.77 42.31" y="0" font-size="20" fill="#454545">5,000</text>
</svg>
<svg x="393" y="783" width="370" height="256" overflow="hidden">
<text transform="translate(303.00 83.55) scale(0.78 1)" x="0.00 11.54 19.23 30.77 42.31" y="0" font-size="20" fill="#454545">2,500</text>
</svg>
<svg x="393" y="783" width="370" height="256" overflow="hidden">
<text transform="translate(303.00 127.00) scale(0.78 1)" x="0.00" y="0" font-size="20" fill="#454545">0</text>
</svg>
<svg x="393" y="783" width="370" height="256" overflow="hidden">
<text transform="translate(303.00 170.45) scale(0.78 1)" x="0.00 12.18 23.72 31.41 42.95 54.49" y="0" font-size="20" fill="#454545">–2,500</text>
</svg>
<svg x="393" y="783" width="370" height="256" overflow="hidden">
<text transform="translate(303.00 213.90) scale(0.78 1)" x="0.00 12.18 23.72 31.41 42.95 54.49" y="0" font-size="20" fill="#454545">–5,000</text>
</svg>
<text transform="translate(395.40 1030.00) scale(0.78 1)" x="0.00 11.54 23.08 34.62 42.31 53.85" y="0" font-size="20" fill="#454545">300,00</text>
<svg x="393" y="783" width="291" height="256" overflow="hidden">
<text transform="translate(242.60 247.00) scale(0.78 1)" x="0.00 11.54 23.08 34.62 42.31 53.85" y="0" font-size="20" fill="#454545">350,00</text>
</svg>
<rect x="636" y="904.4" width="47" height="2" fill="#000000"/>
<line x1="486.5" y1="801" x2="486.5" y2="1011" stroke="#40c8d0" stroke-width="2" stroke-dasharray="5 4"/>
<polyline points="395.0,812.5 635.0,1005.4" fill="none" stroke="#ff0000" stroke-width="2.7" stroke-linejoin="round"/>
<polyline points="395.0,812.5 635.0,1005.4" fill="none" stroke="#2e8b57" stroke-width="1" stroke-linejoin="round"/>
<rect x="395" y="904.4" width="241" height="2" fill="#0000ff"/>
<rect x="398.5" y="792" width="7" height="7" fill="#b4b4b4" stroke="#7a7a7a" stroke-width="1"/>
<rect x="530.7" y="792" width="7" height="7" fill="#b4b4b4" stroke="#7a7a7a" stroke-width="1"/>
<rect x="590" y="792" width="7" height="7" fill="#b4b4b4" stroke="#7a7a7a" stroke-width="1"/>
<text transform="translate(415.00 802.25) scale(0.97 1)" x="0.00 18.56 37.11 55.67 74.23 92.78" y="0" font-size="19" fill="#ff0000">선물옵션합성</text>
<text transform="translate(547.00 802.25) scale(0.97 1)" x="0.00 18.56" y="0" font-size="19" fill="#2e8b57">선물</text>
<text transform="translate(607.00 802.25) scale(0.97 1)" x="0.00 18.56" y="0" font-size="19" fill="#0000ff">옵션</text>
<rect x="771" y="748" width="371" height="29" fill="#fcfcfc"/>
<rect x="771" y="748" width="371" height="1" fill="#a0a0a0"/>
<rect x="771" y="776" width="371" height="1" fill="#a0a0a0"/>
<rect x="771" y="748" width="1" height="29" fill="#a0a0a0"/>
<rect x="1141" y="748" width="1" height="29" fill="#a0a0a0"/>
<text transform="translate(774.40 769.00) scale(1.0 1)" x="0.00 17.20 34.40 51.60" y="0" font-size="18" fill="#5a5a5a">기타법인</text>
<text transform="translate(864.00 770.00) scale(0.78 1)" x="0.00 12.05 24.10 36.15 48.21 60.26" y="0" font-size="20" fill="#222222">333.50</text>
<rect x="771" y="783" width="371" height="257" fill="#ffffff"/>
<rect x="1062" y="783" width="79" height="257" fill="#d5e0ee"/>
<rect x="771" y="1011" width="291" height="28" fill="#d5e0ee"/>
<rect x="771" y="783" width="371" height="1" fill="#a0a0a0"/>
<rect x="771" y="1039" width="371" height="1" fill="#a0a0a0"/>
<rect x="771" y="783" width="1" height="257" fill="#a0a0a0"/>
<rect x="1141" y="783" width="1" height="257" fill="#a0a0a0"/>
<rect x="1062" y="783" width="1" height="257" fill="#a0a0a0"/>
<rect x="771" y="1011" width="371" height="1" fill="#a0a0a0"/>
<rect x="773" y="784" width="1" height="227" fill="#dadada"/>
<rect x="773" y="1012" width="1" height="27" fill="#a0a0a0"/>
<rect x="1014" y="784" width="1" height="227" fill="#dadada"/>
<rect x="1014" y="1012" width="1" height="27" fill="#a0a0a0"/>
<rect x="1063" y="961.65" width="9" height="1" fill="#8c8c8c"/>
<rect x="1063" y="950.3" width="4" height="1" fill="#8c8c8c"/>
<rect x="1063" y="938.9499999999999" width="4" height="1" fill="#8c8c8c"/>
<rect x="1063" y="927.6" width="4" height="1" fill="#8c8c8c"/>
<rect x="1063" y="916.25" width="4" height="1" fill="#8c8c8c"/>
<rect x="1063" y="904.9" width="9" height="1" fill="#8c8c8c"/>
<rect x="1063" y="893.55" width="4" height="1" fill="#8c8c8c"/>
<rect x="1063" y="882.1999999999999" width="4" height="1" fill="#8c8c8c"/>
<rect x="1063" y="870.85" width="4" height="1" fill="#8c8c8c"/>
<rect x="1063" y="859.5" width="4" height="1" fill="#8c8c8c"/>
<rect x="1063" y="848.15" width="9" height="1" fill="#8c8c8c"/>
<rect x="1063" y="836.8" width="4" height="1" fill="#8c8c8c"/>
<rect x="1063" y="825.4499999999999" width="4" height="1" fill="#8c8c8c"/>
<rect x="1063" y="814.1" width="4" height="1" fill="#8c8c8c"/>
<rect x="1063" y="802.75" width="4" height="1" fill="#8c8c8c"/>
<svg x="771" y="783" width="370" height="256" overflow="hidden">
<text transform="translate(303.00 70.25) scale(0.78 1)" x="0.00 11.54 19.23 30.77 42.31" y="0" font-size="20" fill="#454545">5,000</text>
</svg>
<svg x="771" y="783" width="370" height="256" overflow="hidden">
<text transform="translate(303.00 127.00) scale(0.78 1)" x="0.00" y="0" font-size="20" fill="#454545">0</text>
</svg>
<svg x="771" y="783" width="370" height="256" overflow="hidden">
<text transform="translate(303.00 183.75) scale(0.78 1)" x="0.00 12.18 23.72 31.41 42.95 54.49" y="0" font-size="20" fill="#454545">–5,000</text>
</svg>
<text transform="translate(773.40 1030.00) scale(0.78 1)" x="0.00 11.54 23.08 34.62 42.31 53.85" y="0" font-size="20" fill="#454545">300,00</text>
<svg x="771" y="783" width="291" height="256" overflow="hidden">
<text transform="translate(242.60 247.00) scale(0.78 1)" x="0.00 11.54 23.08 34.62 42.31 53.85" y="0" font-size="20" fill="#454545">350,00</text>
</svg>
<rect x="772" y="904.4" width="289" height="2" fill="#000000"/>
<line x1="864.5" y1="801" x2="864.5" y2="1011" stroke="#40c8d0" stroke-width="2" stroke-dasharray="5 4"/>
<polyline points="772.0,893.5 1011.7,919.7" fill="none" stroke="#2e8b57" stroke-width="1.2" stroke-linejoin="round"/>
<polyline points="772.0,902.6 782.4,899.2 793.7,896.4 810.8,894.1 839.2,893.0 861.9,893.9 884.6,895.2 915.2,897.0 927.8,898.7 940.4,905.2 953.1,913.4 965.7,925.4 978.3,939.3 990.9,959.5 1003.5,979.6 1011.1,991.0" fill="none" stroke="#0000ff" stroke-width="1.3" stroke-linejoin="round"/>
<polyline points="772.0,890.1 782.4,887.8 793.7,885.6 810.8,885.2 825.5,885.6 839.2,887.0 856.2,889.8 867.6,890.9 884.6,894.1 902.6,897.7 915.2,900.2 927.8,902.7 932.9,907.1 946.8,915.3 959.4,926.7 972.0,941.8 978.3,953.1 990.9,974.6 1003.5,993.5 1011.7,1005.5" fill="none" stroke="#ff0000" stroke-width="3.0" stroke-linejoin="round"/>
<rect x="776.5" y="792" width="7" height="7" fill="#b4b4b4" stroke="#7a7a7a" stroke-width="1"/>
<rect x="908.7" y="792" width="7" height="7" fill="#b4b4b4" stroke="#7a7a7a" stroke-width="1"/>
<rect x="968" y="792" width="7" height="7" fill="#b4b4b4" stroke="#7a7a7a" stroke-width="1"/>
<text transform="translate(793.00 802.25) scale(0.97 1)" x="0.00 18.56 37.11 55.67 74.23 92.78" y="0" font-size="19" fill="#ff0000">선물옵션합성</text>
<text transform="translate(925.00 802.25) scale(0.97 1)" x="0.00 18.56" y="0" font-size="19" fill="#2e8b57">선물</text>
<text transform="translate(985.00 802.25) scale(0.97 1)" x="0.00 18.56" y="0" font-size="19" fill="#0000ff">옵션</text>
</svg></body></html>
